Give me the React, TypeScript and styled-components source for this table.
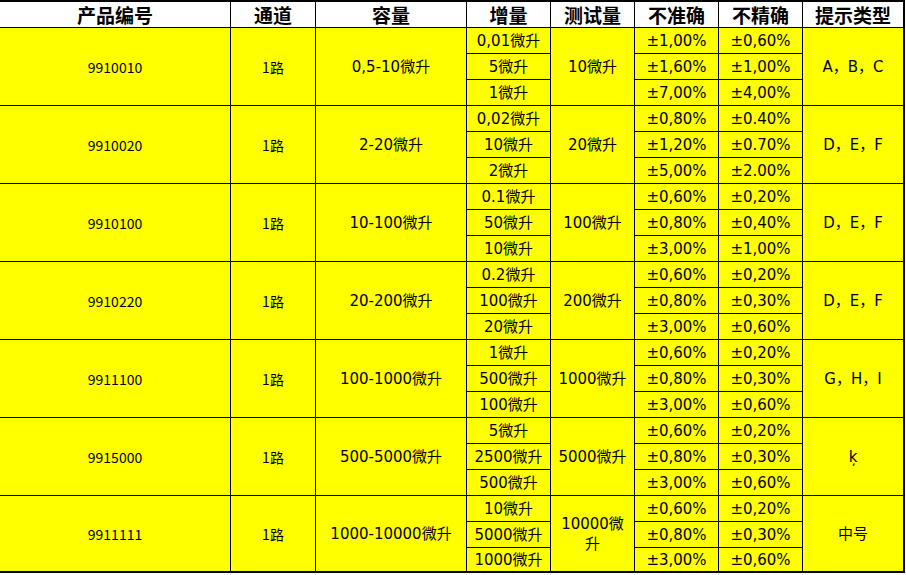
import React from 'react';
import styled, { createGlobalStyle } from 'styled-components';

const GlobalStyle = createGlobalStyle`
  html, body {
    margin: 0;
    padding: 0;
    background: #ffffff;
  }
`;

type Group = {
  code: string;
  volume: string;
  steps: string[];
  test: React.ReactNode;
  accuracy: string[];
  precision: string[];
  hint: string;
};

const groups: Group[] = [
  {
    code: '9910010',
    volume: '0,5-10微升',
    steps: ['0,01微升', '5微升', '1微升'],
    test: '10微升',
    accuracy: ['±1,00%', '±1,60%', '±7,00%'],
    precision: ['±0,60%', '±1,00%', '±4,00%'],
    hint: 'A，B，C',
  },
  {
    code: '9910020',
    volume: '2-20微升',
    steps: ['0,02微升', '10微升', '2微升'],
    test: '20微升',
    accuracy: ['±0,80%', '±1,20%', '±5,00%'],
    precision: ['±0.40%', '±0.70%', '±2.00%'],
    hint: 'D，E，F',
  },
  {
    code: '9910100',
    volume: '10-100微升',
    steps: ['0.1微升', '50微升', '10微升'],
    test: '100微升',
    accuracy: ['±0,60%', '±0,80%', '±3,00%'],
    precision: ['±0,20%', '±0,40%', '±1,00%'],
    hint: 'D，E，F',
  },
  {
    code: '9910220',
    volume: '20-200微升',
    steps: ['0.2微升', '100微升', '20微升'],
    test: '200微升',
    accuracy: ['±0,60%', '±0,80%', '±3,00%'],
    precision: ['±0,20%', '±0,30%', '±0,60%'],
    hint: 'D，E，F',
  },
  {
    code: '9911100',
    volume: '100-1000微升',
    steps: ['1微升', '500微升', '100微升'],
    test: '1000微升',
    accuracy: ['±0,60%', '±0,80%', '±3,00%'],
    precision: ['±0,20%', '±0,30%', '±0,60%'],
    hint: 'G，H，I',
  },
  {
    code: '9915000',
    volume: '500-5000微升',
    steps: ['5微升', '2500微升', '500微升'],
    test: '5000微升',
    accuracy: ['±0,60%', '±0,80%', '±3,00%'],
    precision: ['±0,20%', '±0,30%', '±0,60%'],
    hint: 'ķ',
  },
  {
    code: '9911111',
    volume: '1000-10000微升',
    steps: ['10微升', '5000微升', '1000微升'],
    test: (
      <>
        10000微
        <br />升
      </>
    ),
    accuracy: ['±0,60%', '±0,80%', '±3,00%'],
    precision: ['±0,20%', '±0,30%', '±0,60%'],
    hint: '中号',
  },
];

const headers = ['产品编号', '通道', '容量', '增量', '测试量', '不准确', '不精确', '提示类型'];

const App = () => {
  return (
    <>
      <GlobalStyle />
      <Sheet>
        {headers.map(h => (
          <HeaderCell key={h}>{h}</HeaderCell>
        ))}
        {groups.map((g, gi) => {
          const row = 2 + gi * 3;
          return (
            <React.Fragment key={g.code}>
              <Cell col={1} row={row} span={3} $code>
                {g.code}
              </Cell>
              <Cell col={2} row={row} span={3} $code>
                1路
              </Cell>
              <Cell col={3} row={row} span={3}>
                {g.volume}
              </Cell>
              {g.steps.map((s, i) => (
                <Cell key={'s' + i} col={4} row={row + i}>
                  {s}
                </Cell>
              ))}
              <Cell col={5} row={row} span={3}>
                {g.test}
              </Cell>
              {g.accuracy.map((a, i) => (
                <Cell key={'a' + i} col={6} row={row + i}>
                  {a}
                </Cell>
              ))}
              {g.precision.map((p, i) => (
                <Cell key={'p' + i} col={7} row={row + i}>
                  {p}
                </Cell>
              ))}
              <Cell col={8} row={row} span={3}>
                {g.hint}
              </Cell>
            </React.Fragment>
          );
        })}
      </Sheet>
    </>
  );
};

export default App;

const Sheet = styled.div`
  display: grid;
  grid-template-columns: 230px 84px 150px 83px 83px 83px 83px 100px;
  grid-template-rows: 25px repeat(20, 25px) 23px;
  gap: 1px;
  width: fit-content;
  padding: 2px 2px 2px 0;
  background-color: #000000;
`;

const HeaderCell = styled.div`
  display: flex;
  justify-content: center;
  align-items: center;
  background-color: #ffffff;
  color: #000000;
  font-family: 'Noto Sans CJK SC', sans-serif;
  font-weight: 700;
  font-size: 19px;
  line-height: 1;
`;

const Cell = styled.div<{ col: number; row: number; span?: number; $code?: boolean }>`
  grid-column: ${({ col }) => col};
  grid-row: ${({ row, span }) => `${row} / span ${span || 1}`};
  display: flex;
  justify-content: center;
  align-items: center;
  text-align: center;
  background-color: #ffff00;
  color: #000000;
  font-family: ${({ $code }) =>
    $code ? "'Noto Sans CJK SC', sans-serif" : "'DejaVu Sans', 'Noto Sans CJK SC', sans-serif"};
  font-size: ${({ $code }) => ($code ? '14px' : '15px')};
  line-height: 20px;
  white-space: nowrap;
`;
